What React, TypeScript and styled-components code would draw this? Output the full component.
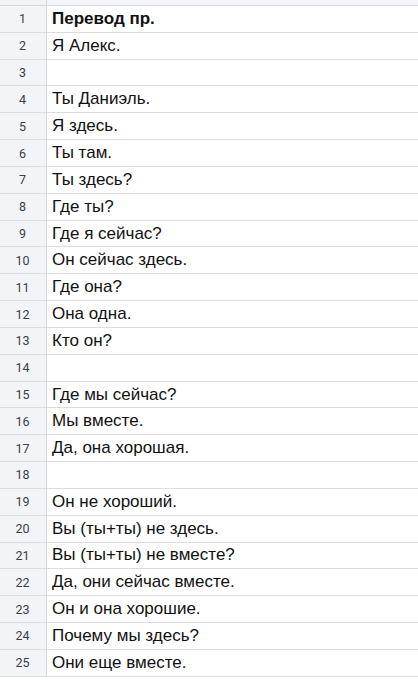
import React from "react";
import styled, { createGlobalStyle } from "styled-components";

const GlobalStyle = createGlobalStyle`
  html, body {
    margin: 0;
    padding: 0;
    background: #ffffff;
  }
  body {
    font-family: "Liberation Sans", Arial, sans-serif;
    overflow: hidden;
  }
`;

const rows: { text: string; bold?: boolean }[] = [
  { text: "Перевод пр.", bold: true },
  { text: "Я Алекс." },
  { text: "" },
  { text: "Ты Даниэль." },
  { text: "Я здесь." },
  { text: "Ты там." },
  { text: "Ты здесь?" },
  { text: "Где ты?" },
  { text: "Где я сейчас?" },
  { text: "Он сейчас здесь." },
  { text: "Где она?" },
  { text: "Она одна." },
  { text: "Кто он?" },
  { text: "" },
  { text: "Где мы сейчас?" },
  { text: "Мы вместе." },
  { text: "Да, она хорошая." },
  { text: "" },
  { text: "Он не хороший." },
  { text: "Вы (ты+ты) не здесь." },
  { text: "Вы (ты+ты) не вместе?" },
  { text: "Да, они сейчас вместе." },
  { text: "Он и она хорошие." },
  { text: "Почему мы здесь?" },
  { text: "Они еще вместе." },
];

const Sheet = styled.div`
  width: 418px;
  height: 680px;
  display: grid;
  grid-template-columns: 47px 1fr;
  grid-template-rows: 6px;
  grid-auto-rows: 26.83px;
  overflow: hidden;
`;

const CornerCell = styled.div`
  background: #f1f3f6;
  border-right: 1px solid #d4d6db;
  border-bottom: 1px solid #d4d6db;
  box-sizing: border-box;
`;

const ColumnHead = styled.div`
  background: #f4f5f8;
  border-bottom: 1px solid #d4d6db;
  box-sizing: border-box;
`;

const RowNumber = styled.div`
  background: #f3f4f8;
  border-right: 1px solid #d4d6db;
  border-bottom: 1px solid #dadce0;
  box-sizing: border-box;
  display: flex;
  align-items: center;
  justify-content: center;
  font-family: Roboto, "Liberation Sans", sans-serif;
  font-size: 12.5px;
  color: #3c4043;
  padding-right: 1px;
`;

const Cell = styled.div<{ $bold?: boolean }>`
  border-bottom: 1px solid #dadce0;
  box-sizing: border-box;
  display: flex;
  align-items: center;
  padding-left: 5px;
  font-size: 17px;
  font-weight: ${({ $bold }) => ($bold ? 700 : 400)};
  color: #111111;
  white-space: nowrap;
`;

const Filler = styled.div`
  background: #ffffff;
`;

export default function App() {
  return (
    <>
      <GlobalStyle />
      <Sheet>
        <CornerCell />
        <ColumnHead />
        {rows.map((row, i) => (
          <React.Fragment key={i}>
            <RowNumber>{i + 1}</RowNumber>
            <Cell $bold={row.bold}>{row.text}</Cell>
          </React.Fragment>
        ))}
        <Filler />
        <Filler />
      </Sheet>
    </>
  );
}
